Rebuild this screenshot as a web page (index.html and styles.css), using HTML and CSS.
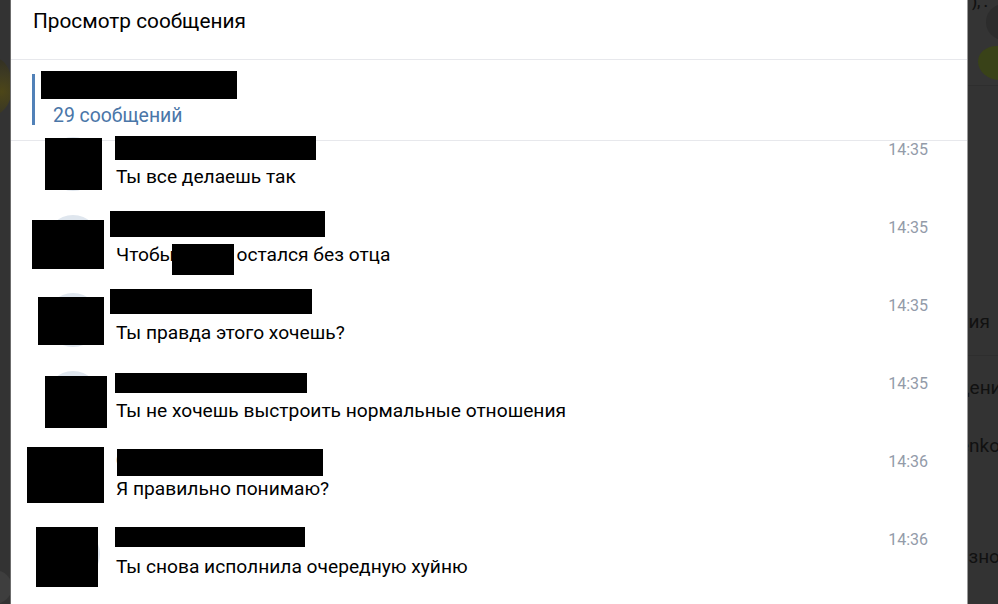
FILE: index.html
```html
<!DOCTYPE html>
<html lang="ru">
<head>
<meta charset="UTF-8">
<meta name="viewport" content="width=device-width, initial-scale=1.0">
<title>Просмотр сообщения</title>
<link rel="stylesheet" href="styles.css">
</head>
	<body>
		<div class="side side-left">
			<div class="bg-avatar-yellow"></div>
			<div class="bg-avatar-grey"></div>
		</div>

		<div class="modal">
			<header class="modal-header">
				<h1>Просмотр сообщения</h1>
			</header>

			<div class="forward">
				<div class="forward-bar">
					<div class="forward-name">Переслано</div>
					<div class="forward-count">29 сообщений</div>
				</div>
				<span class="redact" style="left:30px;top:11px;width:196px;height:28px"></span>
			</div>

			<div class="messages">

				<div class="msg">
					<div class="avatar"></div>
					<div class="msg-body">
						<div class="msg-name">Собеседник</div>
						<div class="msg-text">Ты все делаешь так</div>
					</div>
					<div class="msg-time">14:35</div>
					<span class="redact" style="left:34px;top:-3px;width:57px;height:52px"></span>
					<span class="redact" style="left:104px;top:-5px;width:201px;height:24px"></span>
				</div>

				<div class="msg">
					<div class="avatar"></div>
					<div class="msg-body">
						<div class="msg-name">Собеседник</div>
						<div class="msg-text">Чтобы<span class="redact-word"></span>остался без отца</div>
					</div>
					<div class="msg-time">14:35</div>
					<span class="redact" style="left:21px;top:1px;width:72px;height:49px"></span>
					<span class="redact" style="left:99px;top:-8px;width:215px;height:26px"></span>
				</div>

				<div class="msg">
					<div class="avatar"></div>
					<div class="msg-body">
						<div class="msg-name">Собеседник</div>
						<div class="msg-text">Ты правда этого хочешь?</div>
					</div>
					<div class="msg-time">14:35</div>
					<span class="redact" style="left:27px;top:0px;width:66px;height:48px"></span>
					<span class="redact" style="left:99px;top:-8px;width:202px;height:25px"></span>
				</div>

				<div class="msg">
					<div class="avatar"></div>
					<div class="msg-body">
						<div class="msg-name">Собеседник <span class="emoji-dot"></span></div>
						<div class="msg-text">Ты не хочешь выстроить нормальные отношения</div>
					</div>
					<div class="msg-time">14:35</div>
					<span class="redact" style="left:34px;top:1px;width:62px;height:52px"></span>
					<span class="redact" style="left:104px;top:-2px;width:192px;height:20px"></span>
				</div>

				<div class="msg">
					<div class="avatar"></div>
					<div class="msg-body">
						<div class="msg-name">Собеседник</div>
						<div class="msg-text">Я правильно понимаю?</div>
					</div>
					<div class="msg-time">14:36</div>
					<span class="redact" style="left:16px;top:-6px;width:77px;height:56px"></span>
					<span class="redact" style="left:106px;top:-4px;width:206px;height:27px"></span>
				</div>

				<div class="msg">
					<div class="avatar"></div>
					<div class="msg-body">
						<div class="msg-name">Собеседник</div>
						<div class="msg-text">Ты снова исполнила очередную хуйню</div>
					</div>
					<div class="msg-time">14:36</div>
					<span class="redact" style="left:25px;top:-4px;width:62px;height:60px"></span>
					<span class="redact" style="left:104px;top:-4px;width:190px;height:20px"></span>
				</div>

			</div>
		</div>

		<div class="side side-right">
			<div class="bg-top">
				<div class="bg-punct">), .</div>
				<div class="bg-circle"></div>
				<div class="bg-leaf"></div>
			</div>
			<div class="bg-item bg-notify">Уведомления</div>
			<div class="bg-item bg-msgs">Сообщения</div>
			<div class="bg-item bg-user">Ivanenko</div>
			<div class="bg-item bg-misc">Разнообразное</div>
		</div>
	</body>
</html>
```

FILE: styles.css
```css
html {
    margin: 0;
    padding: 0;
    height: 100%;
}

body {
    margin: 0;
    height: 604px;
    overflow: hidden;
    background-color: #333;
    display: flex;
    font-family: Roboto, "Liberation Sans", sans-serif;
    color: #000;
}

/* dimmed page behind the popup */

.side {
    overflow: hidden;
    position: relative;
}

.side-left {
    width: 10px;
    flex-shrink: 0;
    display: flex;
    flex-direction: column;
}

.bg-avatar-yellow {
    width: 34px;
    height: 58px;
    margin: 58px 0 0 -22px;
    border-radius: 50%;
    background: radial-gradient(circle at 70% 60%, #4d4618 0, #3d3a22 45%, #2c2a24 100%);
}

.bg-avatar-grey {
    width: 36px;
    height: 36px;
    margin: 456px 0 0 -24px;
    border-radius: 50%;
    background: #3e3e3e;
}

.side-right {
    flex: 1;
    display: flex;
    flex-direction: column;
}

.bg-top {
    height: 85px;
    background: #343434;
    border-bottom: 1px solid #2e2e2e;
    position: relative;
}

.bg-punct {
    font-size: 14px;
    line-height: 10px;
    margin: -3px 0 0 4px;
    color: #111;
    font-weight: bold;
}

.bg-circle {
    position: absolute;
    left: 18px;
    top: 4px;
    width: 36px;
    height: 36px;
    border-radius: 50%;
    background: #2c2c2c;
}

.bg-leaf {
    position: absolute;
    left: 10px;
    top: 46px;
    width: 40px;
    height: 34px;
    border-radius: 50% 40% 50% 60%;
    background: #394218;
}

.bg-item {
    font-size: 19px;
    line-height: 22px;
    color: #111;
    white-space: nowrap;
    direction: rtl;
}

.bg-notify {
    margin-top: 225px;
    padding: 0 8px 22px 0;
    border-bottom: 1px solid #2e2e2e;
}

.bg-msgs {
    margin: 21px -14px 0 0;
}

.bg-user {
    margin: 36px -2px 0 0;
}

.bg-misc {
    margin: 89px -12px 0 0;
}

/* popup */

.modal {
    width: 956px;
    flex-shrink: 0;
    background: #fff;
    border-left: 1px solid #6c6c6c;
    border-right: 1px solid #9a9a9a;
    height: 100%;
}

.modal-header {
    height: 59px;
    border-bottom: 1px solid #e7e8ec;
    padding-left: 22px;
    display: flex;
    align-items: center;
}

.modal-header h1 {
    margin: 0 0 17px;
    font-size: 20.8px;
    font-weight: normal;
    line-height: 22px;
    color: #000;
}

.forward {
    height: 81px;
    border-bottom: 1px solid #e7e8ec;
    padding-left: 21px;
    position: relative;
    box-sizing: border-box;
    padding-top: 14px;
}

.forward-bar {
    border-left: 3px solid #5181b8;
    height: 51px;
    padding-left: 18px;
    box-sizing: border-box;
}

.forward-name {
    font-size: 17px;
    font-weight: 500;
    color: #2a5885;
    line-height: 20px;
    padding-top: 2px;
}

.forward-count {
    font-size: 19.4px;
    color: #4a76a8;
    line-height: 22px;
    margin-top: 9px;
}

.messages {
    display: flex;
    flex-direction: column;
}

.msg {
    height: 78px;
    display: flex;
    position: relative;
    padding: 0 39px 0 35px;
}

.avatar {
    width: 54px;
    height: 54px;
    border-radius: 50%;
    margin-top: -4px;
    background: #dfe6ee;
    flex-shrink: 0;
}

.msg-body {
    flex: 1;
    padding-left: 16px;
}

.msg-name {
    font-size: 17px;
    font-weight: 500;
    color: #2a5885;
    line-height: 14px;
}

.emoji-dot {
    display: inline-block;
    width: 4px;
    height: 4px;
    border-radius: 50%;
    background: #b45ad8;
}

.msg-text {
    font-size: 19.2px;
    line-height: 22px;
    margin-top: 11px;
    color: #000;
}

.msg-time {
    font-size: 16px;
    line-height: 14px;
    padding-top: 2px;
    color: #939ba9;
}

.redact {
    position: absolute;
    background: #000;
}

.redact-word {
    display: inline-block;
    width: 62px;
    height: 31px;
    margin: 0 2px 0 -2px;
    background: #000;
    vertical-align: -14px;
}
```
